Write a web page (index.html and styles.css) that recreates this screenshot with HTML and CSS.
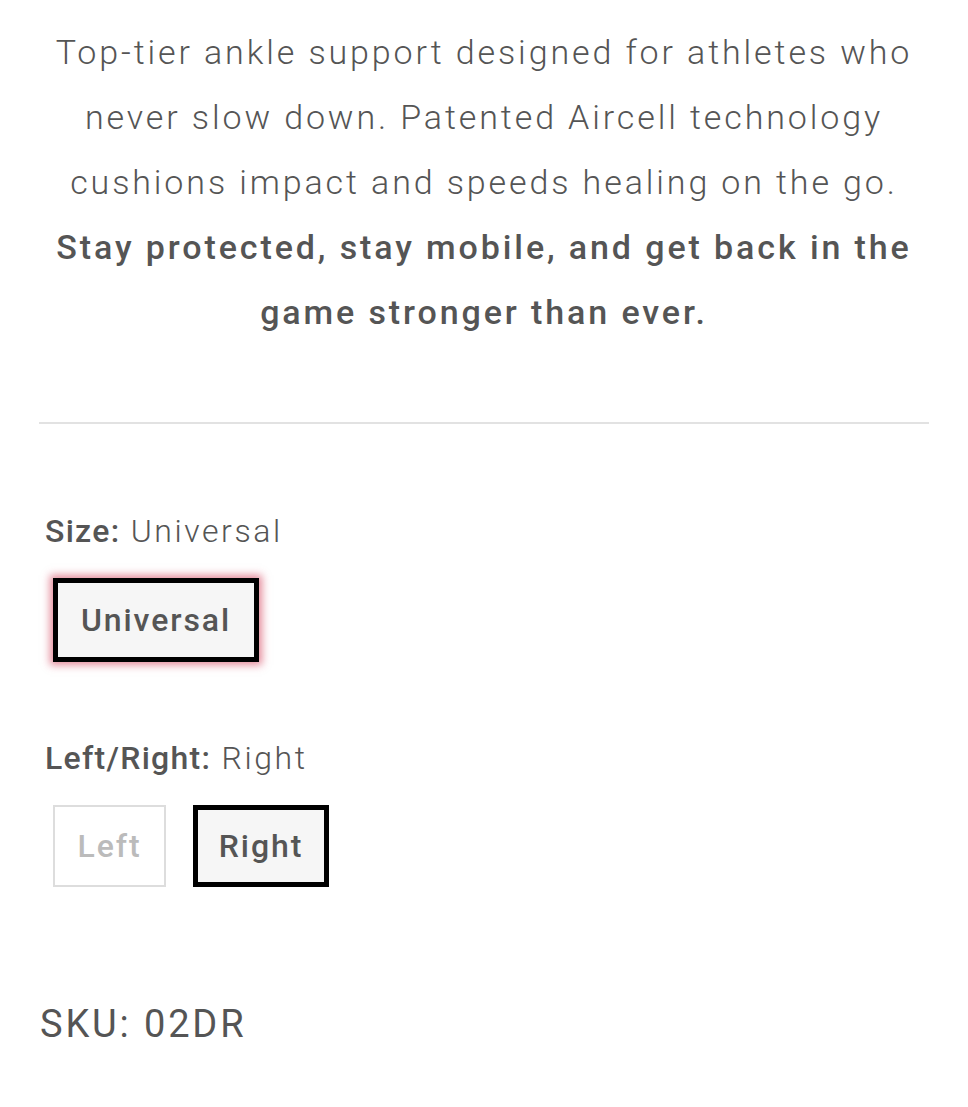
FILE: index.html
```html
<!DOCTYPE html>
<html>
<head>
<meta charset="utf-8">
<link rel="stylesheet" href="styles.css">
</head>
<body>
<div class="page">
  <p class="desc">Top-tier ankle support designed for athletes who never slow down. Patented Aircell technology cushions impact and speeds healing on the go. <strong>Stay protected, stay mobile, and get back in the game stronger than ever.</strong></p>
  <hr class="divider">
  <div class="option first">
    <div class="label"><b>Size:</b> Universal</div>
    <div class="choices">
      <span class="choice selected glow">Universal</span>
    </div>
  </div>
  <div class="option">
    <div class="label"><b>Left/Right:</b> Right</div>
    <div class="choices">
      <span class="choice disabled">Left</span>
      <span class="choice selected right">Right</span>
    </div>
  </div>
  <div class="sku">SKU: 02DR</div>
</div>
</body>
</html>
```
FILE: styles.css
```css
html, body {
  margin: 0;
  padding: 0;
  background: #fff;
}
.page {
  padding: 0 39px;
  font-family: Roboto, "Liberation Sans", sans-serif;
  color: #555;
}
.desc {
  margin: 20px 0 0;
  text-align: center;
  font-size: 34px;
  font-weight: 300;
  line-height: 65px;
  letter-spacing: 0.085em;
}
.desc strong {
  font-weight: 500;
  letter-spacing: 0.085em;
}
.divider {
  margin: 77px 0 0;
  border: 0;
  height: 2px;
  background: #e2e2e2;
}
.option {
  padding-left: 6px;
  margin-top: 76px;
}
.option.first {
  margin-top: 87px;
}
.label {
  font-size: 32px;
  font-weight: 300;
  line-height: 40px;
  letter-spacing: 0.08em;
}
.label b {
  font-weight: 500;
  letter-spacing: 0.04em;
}
.choices {
  display: flex;
  gap: 27px;
  margin-top: 27px;
  padding-left: 8px;
}
.choice {
  box-sizing: border-box;
  display: flex;
  align-items: center;
  justify-content: center;
  font-size: 32px;
  font-weight: 500;
  letter-spacing: 0.06em;
  background: #f6f6f6;
}
.choice.selected {
  border: 5px solid #000;
}
.choice.glow {
  width: 206px;
  height: 84px;
  box-shadow: 0 0 8px 3px rgba(205, 40, 70, 0.55);
}
.choice.right {
  width: 136px;
  height: 82px;
}
.choice.disabled {
  border: 2px solid #ddd;
  color: #bbb;
  background: #fff;
  width: 113px;
  height: 82px;
}
.sku {
  margin-top: 115px;
  padding-left: 1px;
  font-size: 38px;
  font-weight: 400;
  line-height: 44px;
  letter-spacing: 0.075em;
}
```
